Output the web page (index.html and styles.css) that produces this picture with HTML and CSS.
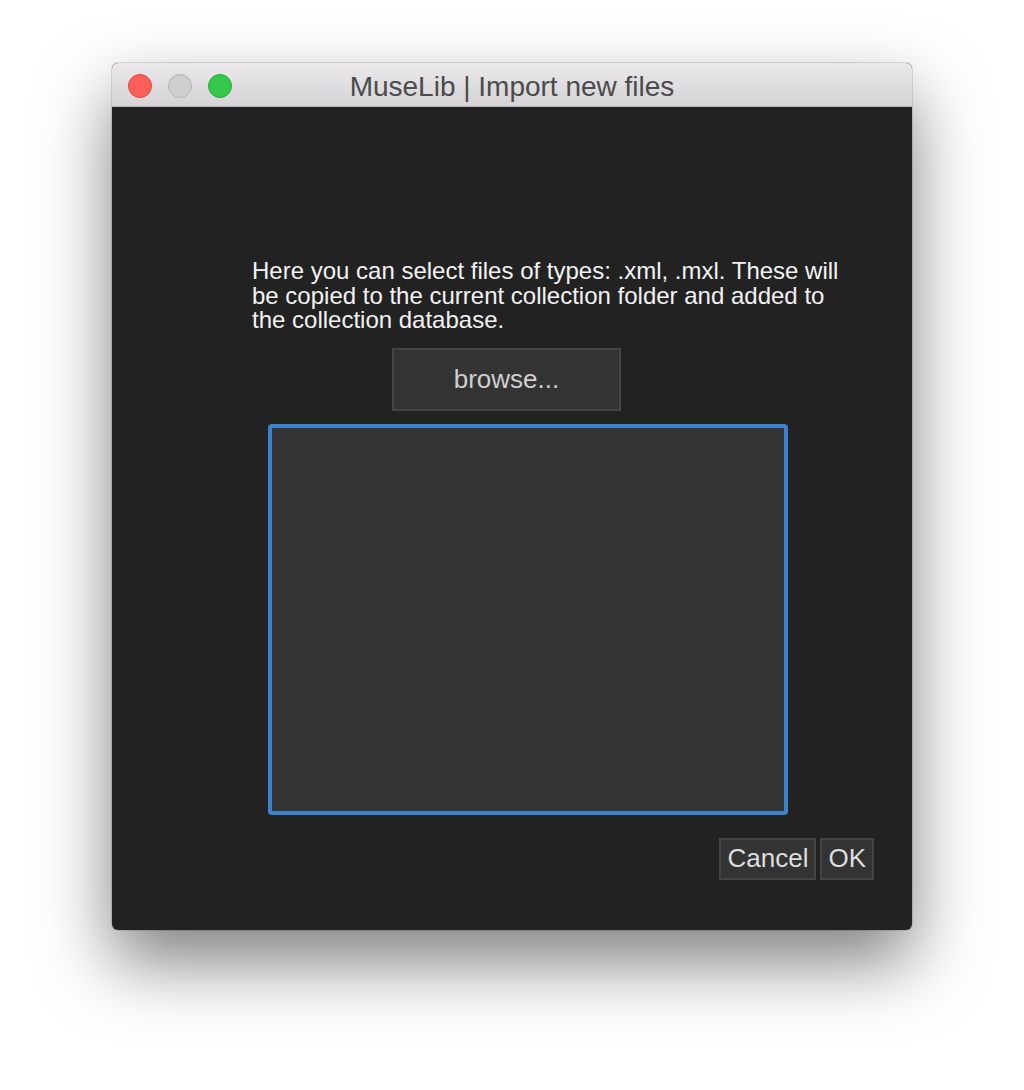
FILE: index.html
```html
<!DOCTYPE html>
<html>
<head>
<meta charset="utf-8">
<title>MuseLib | Import new files</title>
<link rel="stylesheet" href="styles.css">
</head>
<body>
<div class="window">
  <div class="titlebar">
    <div class="lights">
      <span class="light red"></span>
      <span class="light gray"></span>
      <span class="light green"></span>
    </div>
    <div class="title">MuseLib | Import new files</div>
  </div>
  <div class="content">
    <p class="desc">Here you can select files of types: .xml, .mxl. These will be copied to the current collection folder and added to the collection database.</p>
    <button class="browse">browse...</button>
    <div class="filelist"></div>
    <div class="actions">
      <button class="btn">Cancel</button>
      <button class="btn">OK</button>
    </div>
  </div>
</div>
</body>
</html>
```
FILE: styles.css
```css
html, body {
  margin: 0;
  padding: 0;
  background: #ffffff;
  height: 1090px;
  overflow: hidden;
}
.window {
  width: 800px;
  height: 867px;
  margin: 63px 0 0 112px;
  border-radius: 6px;
  overflow: hidden;
  background: #222222;
  box-shadow: 0 0 0 1px rgba(0,0,0,0.12), 0 32px 70px rgba(0,0,0,0.5);
  display: flex;
  flex-direction: column;
  font-family: "Liberation Sans", Arial, sans-serif;
}
.titlebar {
  height: 44px;
  flex: none;
  box-sizing: border-box;
  background: linear-gradient(#ebe9eb, #d5d3d5);
  border-bottom: 1px solid #b5b3b5;
  position: relative;
  display: flex;
  align-items: center;
  justify-content: center;
  padding-top: 4px;
}
.lights {
  position: absolute;
  left: 16px;
  top: 11px;
  display: flex;
  gap: 16px;
}
.light {
  width: 22px;
  height: 22px;
  border-radius: 50%;
  border: 1px solid;
}
.red { background: #fc5f57; border-color: #e1463f; }
.gray { background: #d0cfd0; border-color: #b7b6b7; }
.green { background: #34c84a; border-color: #26a934; }
.title {
  font-size: 28px;
  color: #4b4b4b;
}
.content {
  flex: 1;
  display: flex;
  flex-direction: column;
  align-items: flex-start;
  padding: 152px 38px 0 140px;
}
.desc {
  margin: 0;
  width: 600px;
  font-size: 24px;
  line-height: 24.5px;
  color: #f2f2f2;
}
.browse {
  margin: 15px 0 0 140px;
  width: 229px;
  height: 63px;
  background: #333333;
  border: 2px solid #454545;
  color: #cfcfcf;
  font-family: inherit;
  font-size: 26px;
  padding: 0;
}
.filelist {
  margin: 13px 0 0 16px;
  width: 520px;
  height: 391px;
  box-sizing: border-box;
  border: 4px solid #3b82cf;
  border-radius: 4px;
  background: #333333;
}
.actions {
  align-self: flex-end;
  display: flex;
  gap: 4px;
  margin-top: 23px;
}
.btn {
  height: 42px;
  background: #333333;
  border: 2px solid #444444;
  color: #dedede;
  font-family: inherit;
  font-size: 26px;
  padding: 0 6px;
}
```
